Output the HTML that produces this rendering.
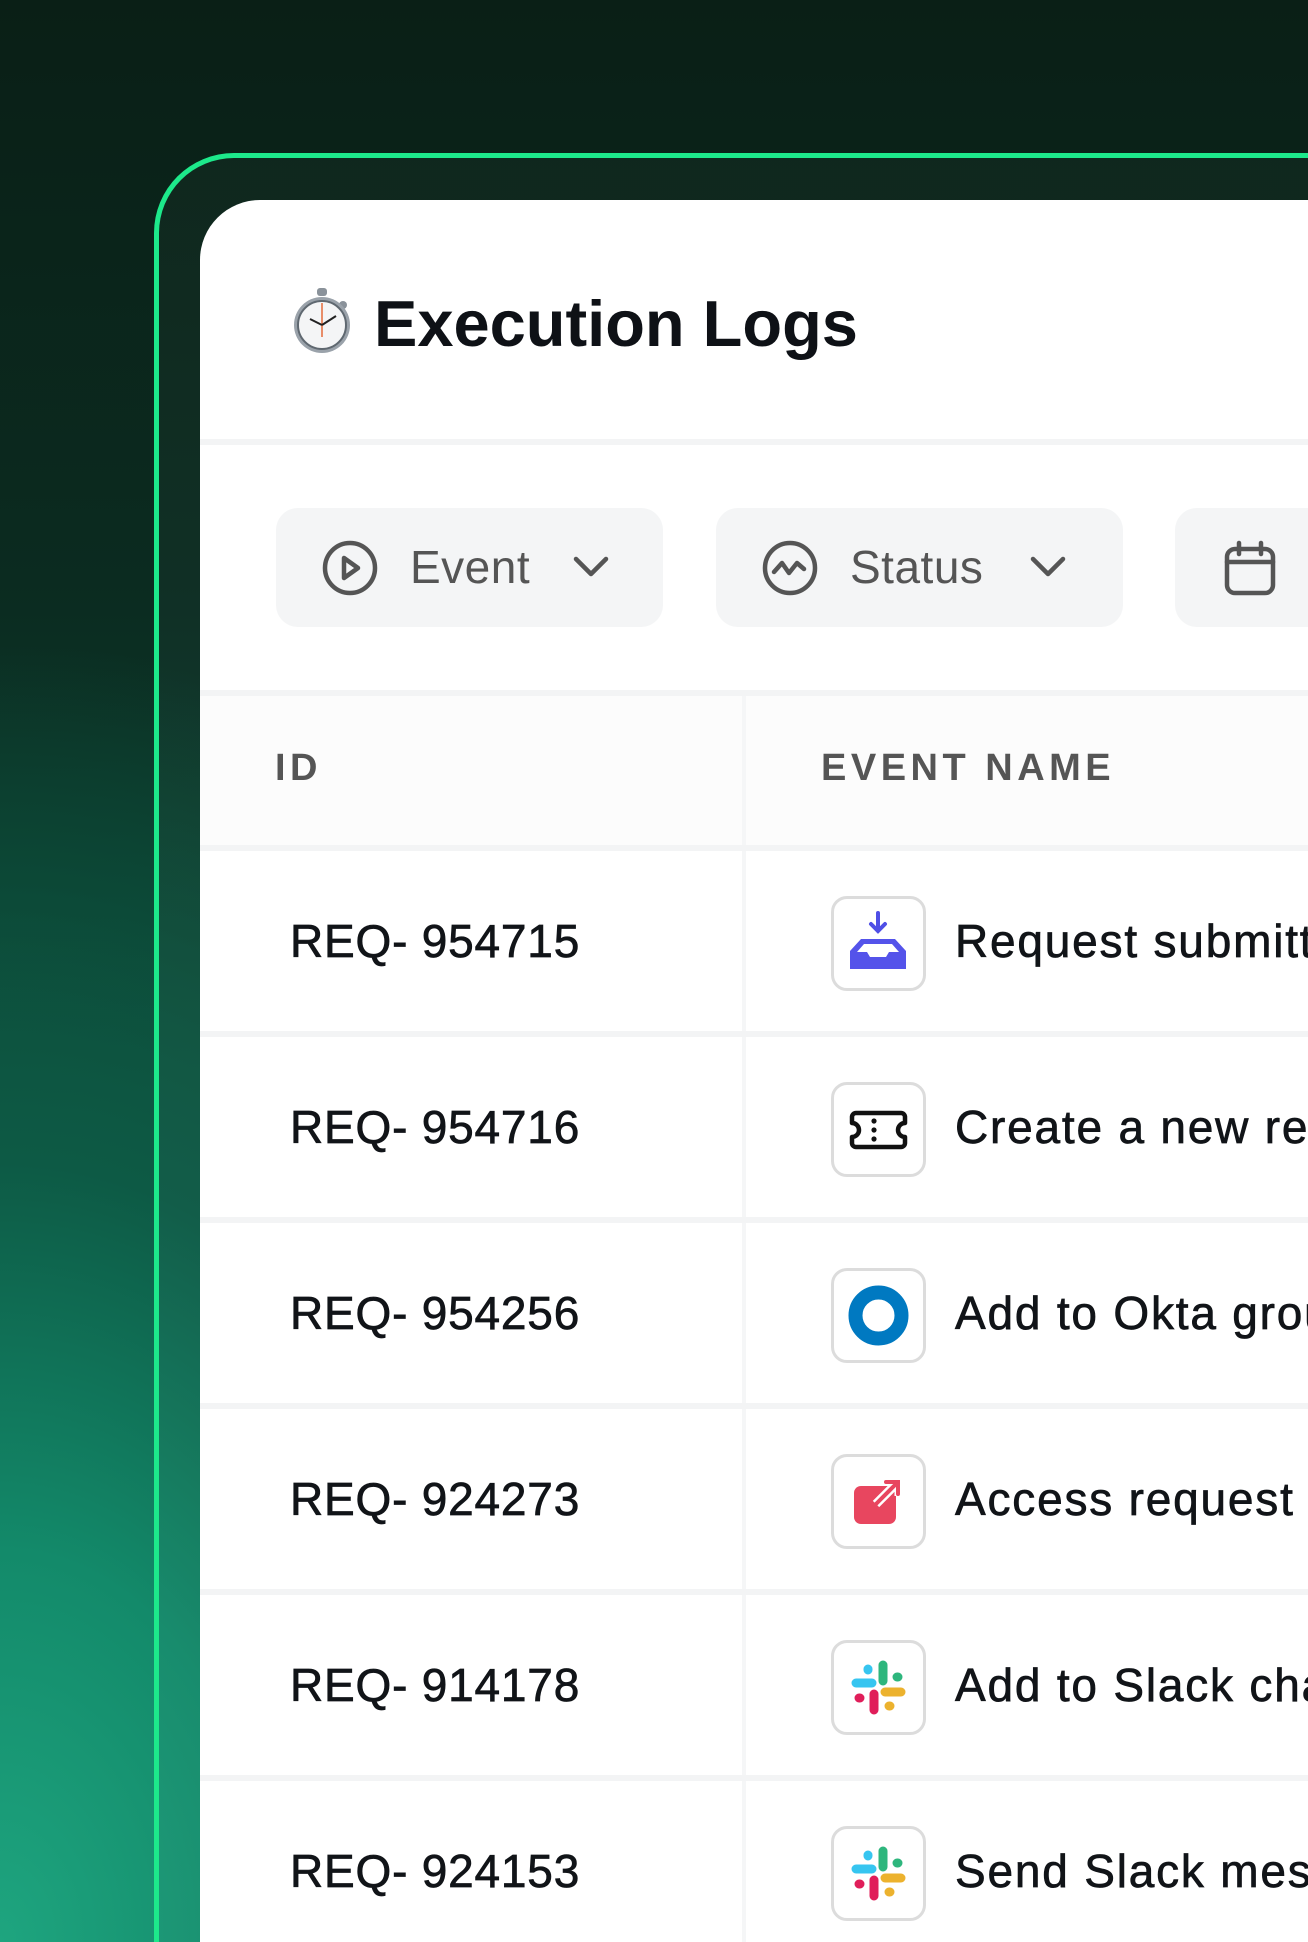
<!DOCTYPE html>
<html><head><meta charset="utf-8"><style>
*{margin:0;padding:0;box-sizing:border-box}
html,body{width:1308px;height:1942px;overflow:hidden}
body{position:relative;font-family:"Liberation Sans",sans-serif;
background:
radial-gradient(ellipse 900px 1300px at 0px 1942px,#1ea57f 0%,#138a6a 30%,#0d5a45 60%,rgba(11,40,30,0) 100%),
linear-gradient(180deg,#0a1f16 0%,#0b2b20 30%,#0d4634 60%,#10604a 100%);}
.clip{position:absolute;left:0;top:0;width:1308px;height:1942px;overflow:hidden}
.frame{position:absolute;left:154px;top:153px;width:1154px;height:1789px;border:5px solid #1de98b;border-right:none;border-bottom:none;border-radius:80px 0 0 0;background:rgba(255,255,255,0.025)}
.card{position:absolute;left:200px;top:200px;width:1108px;height:1742px;background:#fff;border-radius:60px 0 0 0;overflow:hidden}
.title{position:absolute;left:174px;top:86px;font-size:65px;font-weight:bold;color:#0e1116;white-space:nowrap}
.sep{position:absolute;left:0;width:1108px;height:6px;background:#f3f4f5}
.btn{position:absolute;top:308px;height:119px;background:#f4f5f6;border-radius:22px}
.btn span{position:absolute;top:32px;font-size:46px;color:#555;letter-spacing:0.5px}
.hdr{position:absolute;top:496px;left:0;width:1108px;height:149px;background:#fcfcfc}
.h{position:absolute;top:51px;font-size:38px;font-weight:bold;color:#555;letter-spacing:4.5px}
.vline{position:absolute;left:542px;top:496px;width:4px;height:1246px;background:#f5f6f7}
.row{position:absolute;left:0;width:1108px;height:160px;overflow:hidden}
.row .id{position:absolute;left:90px;top:63px;font-size:46px;color:#111418;white-space:nowrap;letter-spacing:0.8px;-webkit-text-stroke:0.7px #111418}
.row .ic{position:absolute;left:631px;top:45px;width:95px;height:95px;border:3px solid #dcdcdc;border-radius:16px;background:#fff}
.row .ic svg{position:absolute;left:0;top:0}
.row .nm{position:absolute;left:755px;top:63px;font-size:46px;color:#111418;white-space:nowrap;letter-spacing:1.8px;-webkit-text-stroke:0.7px #111418}
</style></head><body>
<div class="clip">
<div class="frame"></div>
<div class="card">
 <svg style="position:absolute;left:90px;top:85px" width="66" height="70" viewBox="0 0 66 70">
  <rect x="27" y="3" width="10" height="8" rx="3" fill="#8a929a"/>
  <circle cx="53" cy="20" r="4" fill="#8a929a"/>
  <circle cx="32" cy="40" r="28" fill="#9aa2aa"/>
  <circle cx="32" cy="40" r="24" fill="#f4f5f6" stroke="#5f6870" stroke-width="2"/>
  <line x1="32" y1="18" x2="32" y2="52" stroke="#e56a3a" stroke-width="1.5"/>
  <line x1="32" y1="40" x2="20" y2="34" stroke="#222" stroke-width="2"/>
  <line x1="32" y1="40" x2="46" y2="31" stroke="#222" stroke-width="2"/>
 </svg>
 <div class="title">Execution Logs</div>
 <div class="sep" style="top:239px"></div>
 <div class="btn" style="left:76px;width:387px">
  <svg style="position:absolute;left:46px;top:32px" width="56" height="56" viewBox="0 0 56 56" fill="none" stroke="#555" stroke-width="4.5"><circle cx="28" cy="28" r="25"/><path d="M22 18v20l14-10z" stroke-linejoin="round"/></svg>
  <span style="left:134px">Event</span>
  <svg style="position:absolute;left:297px;top:47px" width="36" height="24" viewBox="0 0 36 24" fill="none" stroke="#555" stroke-width="4.5" stroke-linecap="round" stroke-linejoin="round"><path d="M3 4l15 15 15-15"/></svg>
 </div>
 <div class="btn" style="left:516px;width:407px">
  <svg style="position:absolute;left:46px;top:32px" width="56" height="56" viewBox="0 0 56 56" fill="none" stroke="#555" stroke-width="4.5" stroke-linecap="round" stroke-linejoin="round"><circle cx="28" cy="28" r="25"/><path d="M12 32l8-9 7 10 8-10 7 6"/></svg>
  <span style="left:134px">Status</span>
  <svg style="position:absolute;left:314px;top:47px" width="36" height="24" viewBox="0 0 36 24" fill="none" stroke="#555" stroke-width="4.5" stroke-linecap="round" stroke-linejoin="round"><path d="M3 4l15 15 15-15"/></svg>
 </div>
 <div class="btn" style="left:975px;width:133px;border-radius:22px 0 0 22px">
  <svg style="position:absolute;left:48px;top:32px" width="54" height="56" viewBox="0 0 54 56" fill="none" stroke="#555" stroke-width="4.5" stroke-linecap="round"><rect x="4" y="9" width="46" height="44" rx="8"/><path d="M4 22h46M16 3v11M38 3v11"/></svg>
 </div>
 <div class="sep" style="top:490px"></div>
 <div class="hdr"><div class="h" style="left:75px">ID</div><div class="h" style="left:621px">EVENT NAME</div></div>
 <div class="vline"></div>

 <div class="sep" style="top:645px"></div>
 <div class="row" style="top:651px"><div class="id">REQ- 954715</div>
  <div class="ic"><svg width="89" height="89" viewBox="0 0 89 89"><path d="M44 14v18M37 25l7 7 7-7" stroke="#4f4fe6" stroke-width="4" fill="none" stroke-linecap="round"/><path d="M27 40h34l11 12v18H16V52z" fill="#5453ea"/><path d="M30 45h28l7 8H55l-3 5H36l-3-5H23z" fill="#fff"/></svg></div>
  <div class="nm">Request submitted</div></div>
 <div class="sep" style="top:831px"></div>
 <div class="row" style="top:837px"><div class="id">REQ- 954716</div>
  <div class="ic"><svg width="89" height="89" viewBox="0 0 89 89"><path d="M22 28h45a4 4 0 0 1 4 4v6a7 7 0 0 0 0 14v6a4 4 0 0 1-4 4H22a4 4 0 0 1-4-4V52a7 7 0 0 0 0-14v-6a4 4 0 0 1 4-4z" fill="none" stroke="#111" stroke-width="4.5" stroke-linejoin="round"/><circle cx="40" cy="36" r="2.6" fill="#111"/><circle cx="40" cy="45" r="2.6" fill="#111"/><circle cx="40" cy="54" r="2.6" fill="#111"/></svg></div>
  <div class="nm">Create a new request</div></div>
 <div class="sep" style="top:1017px"></div>
 <div class="row" style="top:1023px"><div class="id">REQ- 954256</div>
  <div class="ic"><svg width="89" height="89" viewBox="0 0 89 89"><circle cx="44.5" cy="44.5" r="23" fill="none" stroke="#0079c1" stroke-width="14"/></svg></div>
  <div class="nm">Add to Okta group</div></div>
 <div class="sep" style="top:1203px"></div>
 <div class="row" style="top:1209px"><div class="id">REQ- 924273</div>
  <div class="ic"><svg width="89" height="89" viewBox="0 0 89 89"><rect x="20" y="29" width="42" height="38" rx="7" fill="#e8465f"/><path d="M42 47l21-21M50 24h15v15" stroke="#fff" stroke-width="9" fill="none"/><path d="M42 47l21-21M52 25h12v12" stroke="#e8465f" stroke-width="4" fill="none" stroke-linecap="round"/></svg></div>
  <div class="nm">Access request approved</div></div>
 <div class="sep" style="top:1389px"></div>
 <div class="row" style="top:1395px"><div class="id">REQ- 914178</div>
  <div class="ic"><svg width="89" height="89" viewBox="0 0 89 89"><g stroke-linecap="round" stroke-width="9" fill="none"><path d="M22 40h16M34 26v1" stroke="#36c5f0"/><path d="M49 22v16M63 34h1" stroke="#2eb67d"/><path d="M51 49h16M55 63h1" stroke="#ecb22e"/><path d="M40 51v16M25 55h1" stroke="#e01e5a"/></g></svg></div>
  <div class="nm">Add to Slack channel</div></div>
 <div class="sep" style="top:1575px"></div>
 <div class="row" style="top:1581px;height:161px"><div class="id">REQ- 924153</div>
  <div class="ic"><svg width="89" height="89" viewBox="0 0 89 89"><g stroke-linecap="round" stroke-width="9" fill="none"><path d="M22 40h16M34 26v1" stroke="#36c5f0"/><path d="M49 22v16M63 34h1" stroke="#2eb67d"/><path d="M51 49h16M55 63h1" stroke="#ecb22e"/><path d="M40 51v16M25 55h1" stroke="#e01e5a"/></g></svg></div>
  <div class="nm">Send Slack message</div></div>
</div>
</div>
</body></html>
